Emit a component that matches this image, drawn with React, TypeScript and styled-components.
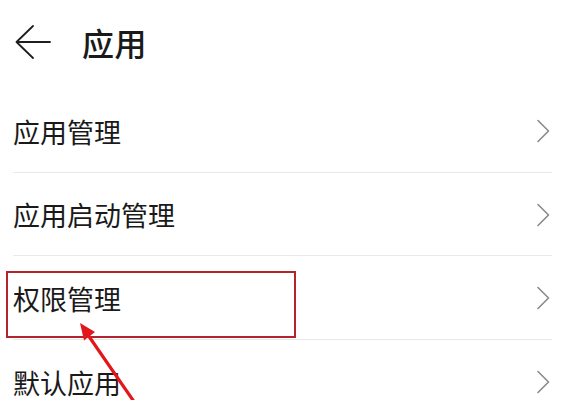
import React from 'react'
import styled, { createGlobalStyle } from 'styled-components'

const GlobalStyle = createGlobalStyle`
  html, body {
    margin: 0;
    padding: 0;
    background: #ffffff;
  }
  body {
    font-family: "Noto Sans CJK SC", "Noto Sans", sans-serif;
    color: #1a1a1a;
  }
`

const Page = styled.div`
  position: relative;
  width: 566px;
  height: 400px;
  overflow: hidden;
  background: #ffffff;
`

const Header = styled.header`
  display: flex;
  align-items: center;
  height: 84px;
  padding: 0 0 5px 15px;
  gap: 30px;
`

const BackButton = styled.button`
  display: flex;
  align-items: center;
  justify-content: center;
  width: 37px;
  height: 40px;
  padding: 0;
  border: none;
  background: transparent;
  cursor: pointer;
`

const Title = styled.h1`
  margin: 0;
  font-size: 32px;
  font-weight: 500;
  line-height: 1;
  color: #1a1a1a;
  letter-spacing: 0.5px;
`

const List = styled.ul`
  list-style: none;
  margin: 0;
  padding: 0;
`

const Row = styled.li<{ last?: boolean }>`
  position: relative;
  display: flex;
  align-items: center;
  justify-content: space-between;
  height: 82.5px;
  margin: 0 14px 0 13px;
  padding: 2px 2px 0 0;
  box-sizing: border-box;
  border-bottom: ${({ last }) => (last ? 'none' : '1px solid #e8e8e8')};
  height: 83.5px;
`

const Label = styled.span`
  font-size: 27px;
  line-height: 1;
  color: #1a1a1a;
`

const Highlight = styled.div`
  position: absolute;
  left: -7px;
  top: 15px;
  width: 290px;
  height: 67px;
  box-sizing: border-box;
  border: 2px solid #b3242f;
  pointer-events: none;
`

const Pointer = styled.svg`
  position: absolute;
  left: 0;
  top: 0;
  pointer-events: none;
`

const Chevron = () => (
  <svg width="14" height="24" viewBox="0 0 14 24" fill="none">
    <path d="M2 1.5 L12.5 12 L2 22.5" stroke="#8a8a8a" strokeWidth="1.6" strokeLinecap="round" strokeLinejoin="round" />
  </svg>
)

const items = [
  { label: '应用管理' },
  { label: '应用启动管理' },
  { label: '权限管理', marked: true },
  { label: '默认应用' },
]

export default function App() {
  return (
    <Page>
      <GlobalStyle />
      <Header>
        <BackButton aria-label="返回">
          <svg width="37" height="36" viewBox="0 0 37 36" fill="none">
            <path d="M18 2 L1.5 18 L18 34 M1.5 18 L35 18" stroke="#1e1e1e" strokeWidth="1.8" strokeLinecap="round" strokeLinejoin="round" />
          </svg>
        </BackButton>
        <Title>应用</Title>
      </Header>
      <List>
        {items.map((item, i) => (
          <Row key={item.label} last={i === items.length - 1}>
            <Label>{item.label}</Label>
            <Chevron />
            {item.marked && <Highlight />}
          </Row>
        ))}
      </List>
      <Pointer width="566" height="400" viewBox="0 0 566 400">
        <line x1="137" y1="406" x2="88" y2="335" stroke="#e3171b" strokeWidth="3.2" strokeLinecap="round" />
        <polygon points="80,323 95,332 84,340.5" fill="#e3171b" />
      </Pointer>
    </Page>
  )
}
